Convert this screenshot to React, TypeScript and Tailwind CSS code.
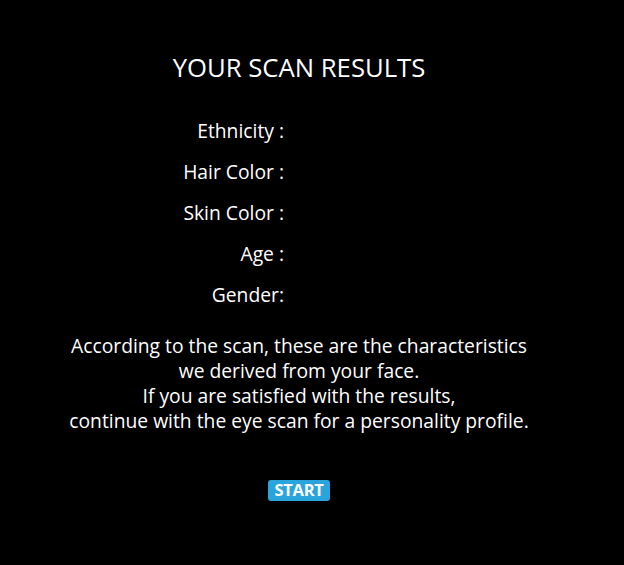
import React from "react";

const labels = ["Ethnicity :", "Hair Color :", "Skin Color :", "Age :", "Gender:"];

export default function App() {
  return (
    <div className="w-[624px] h-[565px] bg-black text-white">
      <div
        className="w-[598px] flex flex-col items-center"
        style={{ fontFamily: '"Open Sans", "Noto Sans", sans-serif' }}
      >
        <h1 className="mt-[52px] text-[25.7px] leading-[32px]">YOUR SCAN RESULTS</h1>
        <div className="mt-[35px] w-full flex flex-col gap-[17px]">
          {labels.map((l) => (
            <div key={l} className="w-[284px] text-right text-[19.3px] leading-[24px]">
              {l}
            </div>
          ))}
        </div>
        <p className="mt-[26px] text-center text-[19.3px] leading-[25px]">
          According to the scan, these are the characteristics
          <br />
          we derived from your face.
          <br />
          If you are satisfied with the results,
          <br />
          continue with the eye scan for a personality profile.
        </p>
        <button className="mt-[47px] w-[62px] h-[21px] rounded-[3px] bg-[#29a4dd] text-white text-[16.5px] font-bold leading-none tracking-[-0.3px] flex items-center justify-center">
          START
        </button>
      </div>
    </div>
  );
}
